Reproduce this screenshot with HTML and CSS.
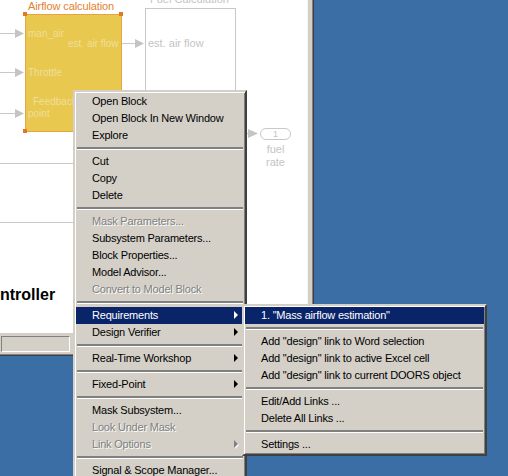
FILE: index.html
```html
<!DOCTYPE html>
<html>
<head>
<meta charset="utf-8">
<link rel="stylesheet" href="styles.css">
</head>
<body>
<div class="desktop">
  <div class="window">
    <div class="canvas">
      <svg class="wires" width="308" height="333" viewBox="0 0 308 333">
        <g stroke="#c8c8c8" stroke-width="1" fill="none">
          <line x1="0" y1="33.5" x2="16" y2="33.5"/>
          <line x1="0" y1="72.5" x2="16" y2="72.5"/>
          <line x1="0" y1="113.5" x2="16" y2="113.5"/>
          <line x1="121" y1="43.5" x2="136" y2="43.5"/>
          <line x1="236" y1="133.5" x2="249" y2="133.5"/>
          <line x1="0" y1="163.5" x2="100" y2="163.5"/>
          <line x1="0" y1="222.5" x2="100" y2="222.5"/>
        </g>
        <g fill="#c4c4c4">
          <polygon points="15,29 24,33.5 15,38"/>
          <polygon points="15,68 24,72.5 15,77"/>
          <polygon points="15,109 24,113.5 15,118"/>
          <polygon points="135,39 144,43.5 135,48"/>
          <polygon points="248,129 258,133.5 248,138"/>
        </g>
      </svg>

      <div class="lbl fuel-title">Fuel Calculation</div>
      <div class="fuel-block"></div>
      <div class="lbl fuel-in">est. air flow</div>

      <div class="lbl air-title">Airflow calculation</div>
      <div class="air-block"></div>
      <span class="handle h-tl"></span>
      <span class="handle h-tr"></span>
      <span class="handle h-bl"></span>
      <span class="handle h-br"></span>
      <div class="lbl inner p1">man_air</div>
      <div class="lbl inner p2">Throttle</div>
      <div class="lbl inner p3">Feedback</div>
      <div class="lbl inner p4">point</div>
      <div class="lbl inner out">est. air flow</div>

      <div class="outport">1</div>
      <div class="lbl outname">fuel<br>rate</div>

      <div class="big-title">ntroller</div>
    </div>
    <div class="status">
      <div class="field"></div>
    </div>
  </div>

  <div class="menu main">
    <div class="item">Open Block</div>
    <div class="item">Open Block In New Window</div>
    <div class="item">Explore</div>
    <div class="sep"></div>
    <div class="item">Cut</div>
    <div class="item">Copy</div>
    <div class="item">Delete</div>
    <div class="sep"></div>
    <div class="item disabled">Mask Parameters...</div>
    <div class="item">Subsystem Parameters...</div>
    <div class="item">Block Properties...</div>
    <div class="item">Model Advisor...</div>
    <div class="item disabled">Convert to Model Block</div>
    <div class="sep"></div>
    <div class="item active"><span>Requirements</span><span class="arrow"></span></div>
    <div class="item"><span>Design Verifier</span><span class="arrow"></span></div>
    <div class="sep"></div>
    <div class="item"><span>Real-Time Workshop</span><span class="arrow"></span></div>
    <div class="sep"></div>
    <div class="item"><span>Fixed-Point</span><span class="arrow"></span></div>
    <div class="sep"></div>
    <div class="item">Mask Subsystem...</div>
    <div class="item disabled">Look Under Mask</div>
    <div class="item disabled"><span>Link Options</span><span class="arrow"></span></div>
    <div class="sep"></div>
    <div class="item">Signal &amp; Scope Manager...</div>
  </div>

  <div class="menu submenu">
    <div class="item active">1. &quot;Mass airflow estimation&quot;</div>
    <div class="sep"></div>
    <div class="item">Add &quot;design&quot; link to Word selection</div>
    <div class="item">Add &quot;design&quot; link to active Excel cell</div>
    <div class="item">Add &quot;design&quot; link to current DOORS object</div>
    <div class="sep"></div>
    <div class="item">Edit/Add Links ...</div>
    <div class="item">Delete All Links ...</div>
    <div class="sep"></div>
    <div class="item">Settings ...</div>
  </div>
</div>
</body>
</html>
```

FILE: styles.css
```css
* { box-sizing: border-box; }

html, body {
  margin: 0;
  padding: 0;
}

body {
  width: 508px;
  height: 476px;
  overflow: hidden;
  background: #3a6ea5;
  font-family: "Liberation Sans", Arial, sans-serif;
}

.desktop {
  position: relative;
  width: 508px;
  height: 476px;
  overflow: hidden;
}

/* ---------- window ---------- */
.window {
  position: absolute;
  left: 0;
  top: 0;
  width: 314px;
  height: 356px;
  display: flex;
  flex-direction: column;
  background: #d4d0c8;
  padding: 0 6px 2px 0;
  box-shadow: inset -1px -1px 0 #404040, inset -2px -2px 0 #808080;
}

.canvas {
  position: relative;
  flex: 1;
  background: #fff;
  overflow: hidden;
  border-right: 1px solid #f4f4f4;
}

.status {
  height: 21px;
  padding: 3px 0 0 1px;
  display: flex;
}

.field {
  width: 69px;
  height: 16px;
  border: 1px solid;
  border-color: #808080 #fff #fff #808080;
}

/* ---------- diagram ---------- */
.wires {
  position: absolute;
  left: 0;
  top: 0;
}

.lbl {
  position: absolute;
  font-size: 11px;
  line-height: 13px;
  white-space: nowrap;
  color: #c4c4c4;
}

.fuel-title { left: 150px; top: -7px; }

.fuel-block {
  position: absolute;
  left: 145px;
  top: 8px;
  width: 91px;
  height: 200px;
  border: 1px solid #c8c8c8;
}

.fuel-in { left: 148px; top: 37px; }

.air-title {
  left: 28px;
  top: 0;
  color: #e5812e;
  letter-spacing: -0.1px;
}

.air-block {
  position: absolute;
  left: 25px;
  top: 14px;
  width: 97px;
  height: 118px;
  background: #e8c84e;
  border: 1px solid #e6a442;
}

.handle {
  position: absolute;
  width: 4px;
  height: 4px;
  background: #e07a22;
}
.h-tl { left: 23px; top: 12px; }
.h-tr { left: 119px; top: 12px; }
.h-bl { left: 23px; top: 129px; }
.h-br { left: 119px; top: 129px; }

.inner {
  color: #efdf9c;
  font-size: 10px;
}
.p1 { left: 28px; top: 27px; }
.p2 { left: 28px; top: 66px; }
.p3 { left: 33px; top: 95px; }
.p4 { left: 28px; top: 107px; }
.out { left: 68px; top: 37px; }

.outport {
  position: absolute;
  left: 260px;
  top: 128px;
  width: 31px;
  height: 12px;
  border: 1px solid #c8c8c8;
  border-radius: 6px;
  font-size: 9px;
  line-height: 10px;
  text-align: center;
  color: #c4c4c4;
}

.outname {
  left: 260px;
  top: 143px;
  width: 31px;
  text-align: center;
  line-height: 13px;
}

.big-title {
  position: absolute;
  left: 0;
  top: 286px;
  font-size: 16px;
  line-height: 18px;
  font-weight: bold;
  color: #000;
}

/* ---------- menus ---------- */
.menu {
  position: absolute;
  background: #d4d0c8;
  border: 2px solid;
  border-color: #d4d0c8 #404040 #404040 #d4d0c8;
  box-shadow: inset 1px 1px 0 #fff, inset -1px -1px 0 #808080;
  padding: 1px;
  font-size: 11px;
  letter-spacing: -0.2px;
  color: #000;
}

.main {
  left: 73px;
  top: 90px;
  width: 174px;
  z-index: 1;
}

.submenu {
  left: 242px;
  top: 304px;
  width: 245px;
  z-index: 2;
}

.item {
  height: 17px;
  line-height: 16px;
  padding: 0 6px 1px 16px;
  display: flex;
  justify-content: space-between;
  align-items: center;
  white-space: nowrap;
}

.item.active {
  background: #0a246a;
  color: #fff;
}

.item.disabled {
  color: #808080;
  text-shadow: 1px 1px 0 #fff;
}

.arrow {
  width: 0;
  height: 0;
  border-left: 4px solid currentColor;
  border-top: 4px solid transparent;
  border-bottom: 4px solid transparent;
}

.item.disabled .arrow {
  filter: drop-shadow(1px 1px 0 #fff);
}

.sep {
  height: 9px;
  padding-top: 3px;
  margin: 0 1px;
}

.sep::before {
  content: "";
  display: block;
  height: 2px;
  background: #808080;
  border-bottom: 1px solid #fff;
}
```
